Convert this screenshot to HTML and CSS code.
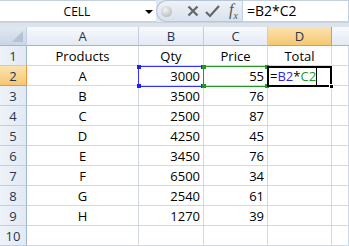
FILE: index.html
```html
<!DOCTYPE html>
<html lang="en">
<head>
<meta charset="UTF-8">
<meta name="viewport" content="width=device-width, initial-scale=1.0">
<title>Sheet</title>
<link rel="stylesheet" href="styles.css">
</head>
<body>
  <div class="window">
    <!-- Formula bar -->
    <div class="formula-bar">
      <div class="name-box">
        <span class="name-text">CELL</span>
        <span class="name-arrow"></span>
      </div>
      <div class="bar-buttons">
        <span class="grip"></span>
        <svg class="btn-icon" width="12" height="12" viewBox="0 0 12 12">
          <path d="M1.5 1.5 L10.5 10.5 M10.5 1.5 L1.5 10.5" stroke="#666" stroke-width="2.2" fill="none"/>
        </svg>
        <svg class="btn-icon" width="15" height="13" viewBox="0 0 15 13">
          <path d="M1 7 L5 11 L14 1" stroke="#666" stroke-width="2.2" fill="none"/>
        </svg>
        <span class="fx">f<sub>x</sub></span>
      </div>
      <div class="formula-input">=B2*C2</div>
    </div>
    <div class="strip"></div>

    <!-- Grid -->
    <div class="sheet">
      <div class="grid">
        <div class="hd corner"><span class="corner-tri"></span></div>
        <div class="hd">A</div>
        <div class="hd">B</div>
        <div class="hd">C</div>
        <div class="hd active">D</div>
        <div class="hd last"></div>

        <div class="rh">1</div>
        <div class="c mid">Products</div>
        <div class="c mid">Qty</div>
        <div class="c mid">Price</div>
        <div class="c mid">Total</div>
        <div class="c"></div>

        <div class="rh active">2</div>
        <div class="c mid">A</div>
        <div class="c num">3000</div>
        <div class="c num">55</div>
        <div class="c edit"><span class="ref-b">B2</span>*<span class="ref-c">C2</span></div>
        <div class="c"></div>

        <div class="rh">3</div>
        <div class="c mid">B</div>
        <div class="c num">3500</div>
        <div class="c num">76</div>
        <div class="c"></div>
        <div class="c"></div>

        <div class="rh">4</div>
        <div class="c mid">C</div>
        <div class="c num">2500</div>
        <div class="c num">87</div>
        <div class="c"></div>
        <div class="c"></div>

        <div class="rh">5</div>
        <div class="c mid">D</div>
        <div class="c num">4250</div>
        <div class="c num">45</div>
        <div class="c"></div>
        <div class="c"></div>

        <div class="rh">6</div>
        <div class="c mid">E</div>
        <div class="c num">3450</div>
        <div class="c num">76</div>
        <div class="c"></div>
        <div class="c"></div>

        <div class="rh">7</div>
        <div class="c mid">F</div>
        <div class="c num">6500</div>
        <div class="c num">34</div>
        <div class="c"></div>
        <div class="c"></div>

        <div class="rh">8</div>
        <div class="c mid">G</div>
        <div class="c num">2540</div>
        <div class="c num">61</div>
        <div class="c"></div>
        <div class="c"></div>

        <div class="rh">9</div>
        <div class="c mid">H</div>
        <div class="c num">1270</div>
        <div class="c num">39</div>
        <div class="c"></div>
        <div class="c"></div>

        <div class="rh">10</div>
        <div class="c"></div>
        <div class="c"></div>
        <div class="c"></div>
        <div class="c"></div>
        <div class="c"></div>
      </div>

      <!-- range highlights over the grid -->
      <div class="sel sel-b">
        <span class="knob k-tl"></span><span class="knob k-bl"></span>
        <span class="knob k-tr"></span><span class="knob k-br"></span>
      </div>
      <div class="sel sel-c">
        <span class="knob k-tl"></span><span class="knob k-bl"></span>
        <span class="knob k-tr"></span><span class="knob k-br"></span>
      </div>
      <div class="sel sel-d">
        <span class="caret"></span>
        <span class="fill-handle"></span>
      </div>
    </div>
  </div>
</body>
</html>
```

FILE: styles.css
```css
* {
  box-sizing: border-box;
}
body {
  margin: 0;
  font-family: "Open Sans", Arial, sans-serif;
  font-size: 13px;
  color: #000;
  background: #fff;
}
.window {
  width: 349px;
  height: 246px;
  overflow: hidden;
}
.formula-bar {
  display: flex;
  height: 22px;
  background: #dfe6ef;
}
.name-box {
  width: 156px;
  display: flex;
  align-items: center;
  justify-content: center;
  position: relative;
  background: #fff;
  border-top: 1px solid #c5d0de;
  border-bottom: 1px solid #c5d0de;
  font-size: 12px;
}
.name-text {
  margin-left: -2px;
}
.name-arrow {
  position: absolute;
  right: 3px;
  top: 9px;
  border-left: 4px solid transparent;
  border-right: 4px solid transparent;
  border-top: 4px solid #000;
}
.bar-buttons {
  width: 86px;
  display: flex;
  align-items: center;
  gap: 6px;
  padding-left: 4px;
  background: linear-gradient(#eef2f8, #d9e2ee);
  border-radius: 11px 0 0 11px;
  border: 1px solid #b8c6d8;
  border-right: none;
}
.grip {
  width: 11px;
  height: 11px;
  border-radius: 50%;
  background: radial-gradient(circle at 40% 35%, #f4f4f4, #a9adb3);
  margin-right: 9px;
}
.btn-icon {
  display: block;
}
.fx {
  font-family: "Liberation Serif", serif;
  font-style: italic;
  font-size: 16px;
  color: #555;
  margin-left: 3px;
}
.fx sub {
  font-size: 10px;
}
.formula-input {
  flex: 1;
  background: #fff;
  border: 1px solid #c5d0de;
  padding-left: 4px;
  line-height: 19px;
  font-size: 14px;
}
.strip {
  height: 5px;
  background: #dde3ea;
  border-top: 1px solid #c9d2dd;
}
.sheet {
  position: relative;
}
.grid {
  display: grid;
  grid-template-columns: 27px 112px 65px 64px 64px 1fr;
  grid-template-rows: 19px repeat(10, 20px);
}
.hd {
  display: flex;
  align-items: center;
  justify-content: center;
  background: linear-gradient(#f7f9fc, #e4eaf3);
  border-right: 1px solid #c0cede;
  border-bottom: 1px solid #9eb6ce;
  color: #27364d;
}
.hd.last {
  border-right: none;
}
.corner {
  background: linear-gradient(#dfe7f1, #c9d6e6);
  position: relative;
}
.corner-tri {
  position: absolute;
  right: 3px;
  bottom: 3px;
  border-left: 11px solid transparent;
  border-bottom: 11px solid #b4c2d4;
}
.rh {
  display: flex;
  align-items: center;
  justify-content: center;
  background: linear-gradient(90deg, #eef3f9, #e2e9f3);
  border-right: 1px solid #9eb6ce;
  border-bottom: 1px solid #c0cede;
  color: #27364d;
}
.hd.active,
.rh.active {
  background: linear-gradient(#fbe3b1, #f5c772);
  border-color: #f29436;
}
.c {
  display: flex;
  align-items: center;
  border-right: 1px solid #d0d7e5;
  border-bottom: 1px solid #d0d7e5;
  padding: 0 3px;
  white-space: nowrap;
}
.mid {
  justify-content: center;
}
.num {
  justify-content: flex-end;
}
.edit {
  padding-left: 2px;
}
.edit::before {
  content: "=";
}
.ref-b {
  color: #2a2ae6;
}
.ref-c {
  color: #1e9a1e;
}
.sel {
  position: absolute;
  top: 39px;
  height: 21px;
  pointer-events: none;
}
.sel-b {
  left: 138px;
  width: 66px;
  border: 1px solid #3333ff;
}
.sel-c {
  left: 203px;
  width: 65px;
  border: 1px solid #229922;
}
.sel-d {
  left: 267px;
  width: 65px;
  border: 2px solid #000;
}
.knob {
  position: absolute;
  width: 4px;
  height: 4px;
}
.sel-b .knob {
  background: #2020ff;
}
.sel-c .knob {
  background: #1e9a1e;
}
.k-tl { left: -2px; top: -2px; }
.k-bl { left: -2px; bottom: -2px; }
.k-tr { right: -2px; top: -2px; }
.k-br { right: -2px; bottom: -2px; }
.caret {
  position: absolute;
  left: 47px;
  top: -1px;
  bottom: -1px;
  width: 1px;
  background: #000;
}
.fill-handle {
  position: absolute;
  right: -4px;
  bottom: -4px;
  width: 5px;
  height: 5px;
  background: #000;
  border: 1px solid #fff;
}
```
